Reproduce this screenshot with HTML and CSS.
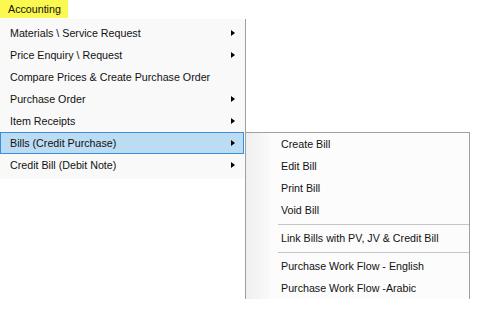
FILE: index.html
```html
<!DOCTYPE html>
<html lang="en">
<head>
  <meta charset="UTF-8">
  <title>Accounting Menu</title>
  <link rel="stylesheet" href="styles.css">
</head>
<body>
  <div class="menubar">
    <span class="menubar-item">Accounting</span>
  </div>

  <div class="menu-area">
    <ul class="menu">
      <li class="menu-item has-sub">Materials \ Service Request</li>
      <li class="menu-item has-sub">Price Enquiry \ Request</li>
      <li class="menu-item">Compare Prices &amp; Create Purchase Order</li>
      <li class="menu-item has-sub">Purchase Order</li>
      <li class="menu-item has-sub">Item Receipts</li>
      <li class="menu-item has-sub active">Bills (Credit Purchase)</li>
      <li class="menu-item has-sub">Credit Bill (Debit Note)</li>
    </ul>

    <!-- popup for the active item -->
    <ul class="submenu">
      <li class="sub-item">Create Bill</li>
      <li class="sub-item">Edit Bill</li>
      <li class="sub-item">Print Bill</li>
      <li class="sub-item">Void Bill</li>
      <li class="separator"></li>
      <li class="sub-item">Link Bills with PV, JV &amp; Credit Bill</li>
      <li class="separator"></li>
      <li class="sub-item">Purchase Work Flow - English</li>
      <li class="sub-item">Purchase Work Flow -Arabic</li>
    </ul>
  </div>
</body>
</html>
```

FILE: styles.css
```css
html, body {
  height: 100%;
}

body {
  margin: 0;
  background: #fff;
  font-family: "Liberation Sans", Arial, sans-serif;
  font-size: 10.7px;
  color: #111;
}

ul {
  list-style: none;
  margin: 0;
  padding: 0;
}

.menubar {
  height: 19px;
}

.menubar-item {
  display: inline-block;
  background-color: #fbf94f;
  height: 18px;
  line-height: 18px;
  padding: 0 7px 0 8px;
}

.menu-area {
  position: relative;
  height: 297px;
}

.menu {
  width: 245px;
  padding: 3px 0;
  background-color: #f9f9f9;
  border-right: 1px solid #a0a0a0;
}

.menu-item {
  position: relative;
  height: 22px;
  line-height: 22px;
  padding-left: 10px;
  margin-right: 1px;
  box-sizing: border-box;
}

.has-sub::after {
  content: "";
  position: absolute;
  right: 9px;
  top: 8px;
  border-left: 4px solid #000;
  border-top: 3.5px solid transparent;
  border-bottom: 3.5px solid transparent;
}

.menu-item.active {
  background-color: #bcdcf4;
  border: 1px solid #3a8ee0;
  line-height: 20px;
  padding-left: 9px;
}

.menu-item.active::after {
  right: 8px;
  top: 7px;
}

.submenu {
  position: absolute;
  left: 245px;
  top: 113px;
  width: 223px;
  background: linear-gradient(to right, #efefef 0, #fafafa 24px, #fcfcfc 24px);
  border: 1px solid #a0a0a0;
  border-bottom: none;
}

.sub-item {
  height: 22px;
  line-height: 22px;
  padding-left: 35px;
}

.separator {
  height: 6px;
  margin-left: 32px;
  background: linear-gradient(#c5c5c5, #c5c5c5) 0 3px / 100% 1px no-repeat;
}
```
